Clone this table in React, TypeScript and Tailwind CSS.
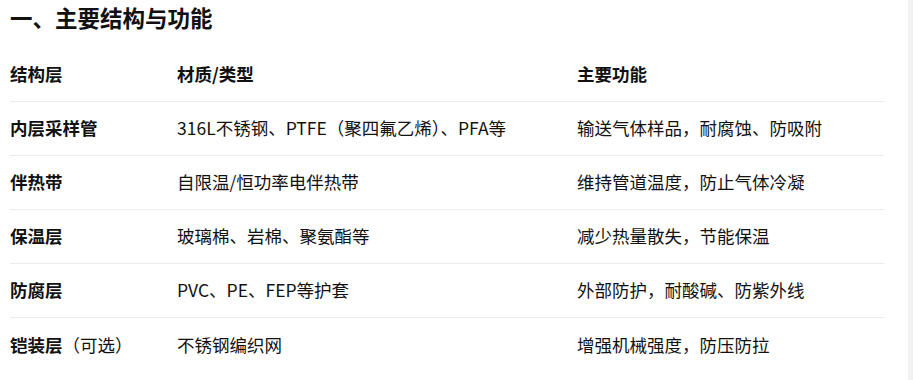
const rows = [
  { layer: '内层采样管', note: '', material: '316L不锈钢、PTFE（聚四氟乙烯）、PFA等', func: '输送气体样品，耐腐蚀、防吸附' },
  { layer: '伴热带', note: '', material: '自限温/恒功率电伴热带', func: '维持管道温度，防止气体冷凝' },
  { layer: '保温层', note: '', material: '玻璃棉、岩棉、聚氨酯等', func: '减少热量散失，节能保温' },
  { layer: '防腐层', note: '', material: 'PVC、PE、FEP等护套', func: '外部防护，耐酸碱、防紫外线' },
  { layer: '铠装层', note: '（可选）', material: '不锈钢编织网', func: '增强机械强度，防压防拉' },
];

const App = () => {
  return (
    <div
      className="flex w-[913px] h-[380px] overflow-hidden bg-white text-[#111]"
      style={{ fontFamily: '"Noto Sans CJK SC", "Noto Sans", sans-serif' }}
    >
      <div className="flex-1 pl-[10px] pr-[24px]">
        <h2 className="text-[22.5px] leading-[34px] font-bold">一、主要结构与功能</h2>

        <div className="mt-[14px] text-[17.5px]">
          <div className="grid grid-cols-[167px_400px_1fr] h-[54px] items-center border-b border-[#ebebeb] font-bold">
            <div>结构层</div>
            <div>材质/类型</div>
            <div>主要功能</div>
          </div>
          {rows.map((row, i) => (
            <div
              key={row.layer}
              className={
                i < rows.length - 1
                  ? 'grid grid-cols-[167px_400px_1fr] h-[54px] items-center border-b border-[#ebebeb]'
                  : 'grid grid-cols-[167px_400px_1fr] h-[54px] items-center'
              }
            >
              <div className="whitespace-nowrap">
                <span className="font-bold">{row.layer}</span>
                {row.note}
              </div>
              <div className="whitespace-nowrap">{row.material}</div>
              <div className="whitespace-nowrap">{row.func}</div>
            </div>
          ))}
        </div>
      </div>
      <div className="w-[5px] h-full bg-[#f1f1f1]" />
    </div>
  );
};

export default App;
